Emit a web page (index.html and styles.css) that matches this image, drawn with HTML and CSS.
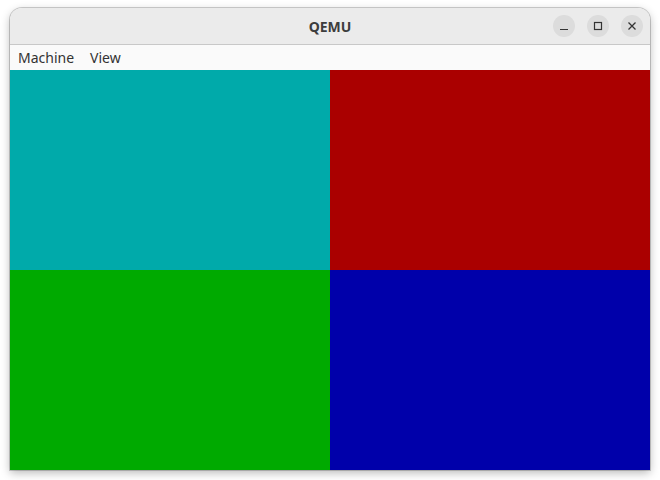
FILE: index.html
```html
<!DOCTYPE html>
<html lang="en">
<head>
  <meta charset="UTF-8"/>
  <title>QEMU</title>
  <link rel="stylesheet" href="styles.css">
</head>
<body>
  <div class="window">
    <div class="titlebar">
      <div class="title">QEMU</div>
      <div class="controls">
        <button class="ctl" aria-label="Minimize">
          <svg width="10" height="10" viewBox="0 0 10 10"><path d="M1 8.5h8" stroke="#333" stroke-width="1.2"/></svg>
        </button>
        <button class="ctl" aria-label="Maximize">
          <svg width="10" height="10" viewBox="0 0 10 10"><rect x="1.5" y="1.5" width="7" height="7" fill="none" stroke="#333" stroke-width="1.2"/></svg>
        </button>
        <button class="ctl" aria-label="Close">
          <svg width="10" height="10" viewBox="0 0 10 10"><path d="M1.5 1.5l7 7M8.5 1.5l-7 7" stroke="#333" stroke-width="1.3"/></svg>
        </button>
      </div>
    </div>
    <div class="menubar">
      <span class="menu">Machine</span>
      <span class="menu">View</span>
    </div>
    <div class="screen">
      <div class="quad cyan"></div>
      <div class="quad red"></div>
      <div class="quad green"></div>
      <div class="quad blue"></div>
    </div>
  </div>
</body>
</html>
```

FILE: styles.css
```css
html, body {
  margin: 0; padding: 0;
  width: 100%; height: 100%;
  background: #fff;
  font-family: "Noto Sans", "DejaVu Sans", sans-serif;
}
body {
  padding: 8px 10px 0 10px;
  box-sizing: border-box;
}
.window {
  width: 640px;
  border-radius: 12px 12px 0 0;
  box-shadow: 0 0 0 1px rgba(0,0,0,0.18), 0 3px 10px rgba(0,0,0,0.28);
  overflow: hidden;
  background: #fafafa;
}
.titlebar {
  height: 36px;
  background: #ebebeb;
  border-bottom: 1px solid #c8c8c8;
  display: flex; align-items: center; justify-content: center;
  position: relative;
}
.title {
  font-size: 14px; font-weight: 700;
  color: #3d3d3d;
}
.controls {
  position: absolute; right: 7px; top: 7px;
  display: flex; gap: 12px;
}
.ctl {
  width: 22px; height: 22px;
  border: none; border-radius: 50%;
  background: #dcdcdc;
  padding: 0;
  display: flex; align-items: center; justify-content: center;
}
.menubar {
  height: 25px;
  background: #fafafa;
  display: flex; align-items: center;
  padding: 0 8px;
  gap: 16px;
}
.menu {
  font-size: 14px; color: #333;
}
.screen {
  display: grid;
  grid-template-columns: 320px 320px;
  grid-template-rows: 200px 200px;
}
.cyan  { background: #00aaaa; }
.red   { background: #aa0000; }
.green { background: #00aa00; }
.blue  { background: #0000aa; }
```
